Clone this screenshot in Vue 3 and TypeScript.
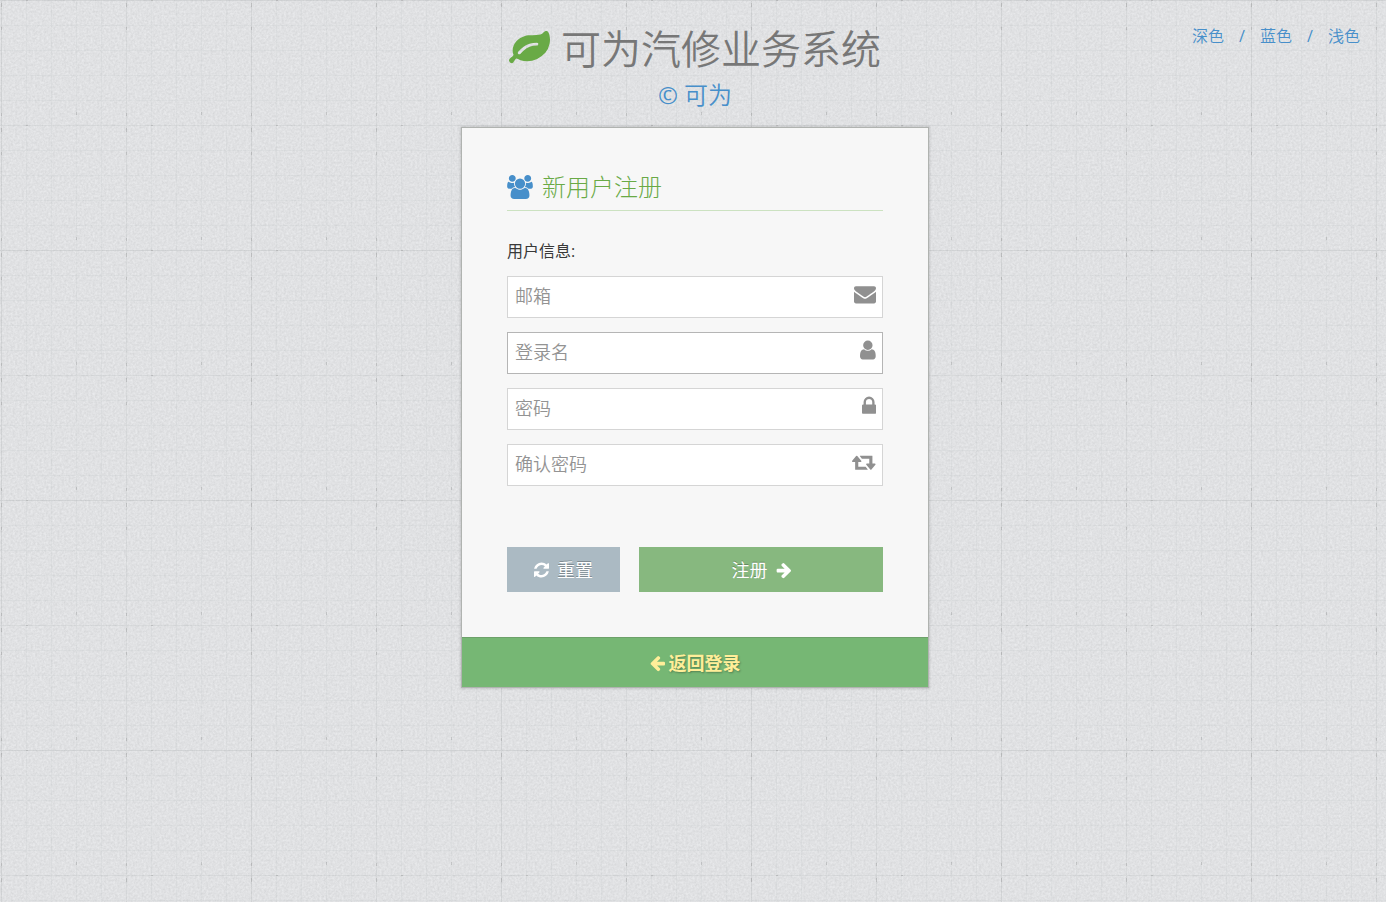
<script setup lang="ts">
import { reactive } from 'vue'

interface Field {
  key: 'email' | 'username' | 'password' | 'confirm'
  type: string
  label: string
  icon: string
  viewBox: string
  active?: boolean
}

const themes: string[] = ['深色', '蓝色', '浅色']

const form = reactive({ email: '', username: '', password: '', confirm: '' })

const fields: Field[] = [
  {
    key: 'email',
    type: 'email',
    label: '邮箱',
    viewBox: '0 0 1792 1792',
    icon: 'M1792 710v794q0 66-47 113t-113 47h-1472q-66 0-113-47t-47-113v-794q44 49 101 87 362 246 497 345 57 42 92.5 65.5t94.5 48 110 24.5h2q51 0 110-24.5t94.5-48 92.5-65.5q170-123 498-345 57-39 100-87zm0-294q0 79-49 151t-122 123q-376 261-468 325-10 7-42.5 31t-54 38.5-52 32.5-57.5 27-50 9h-2q-23 0-50-9t-57.5-27-52-32.5-54-38.5-42.5-31q-91-64-262-182.5t-205-142.5q-62-42-117-115.5t-55-136.5q0-78 41.5-130t118.5-52h1472q65 0 112.5 47t47.5 113z',
  },
  {
    key: 'username',
    type: 'text',
    label: '登录名',
    active: true,
    viewBox: '256 0 1280 1792',
    icon: 'M1536 1399q0 109-62.5 187t-150.5 78h-854q-88 0-150.5-78t-62.5-187q0-85 8.5-160.5t31.5-152 58.5-131 94-89 134.5-34.5q131 128 313 128t313-128q76 0 134.5 34.5t94 89 58.5 131 31.5 152 8.5 160.5zm-256-887q0 159-112.5 271.5t-271.5 112.5-271.5-112.5-112.5-271.5 112.5-271.5 271.5-112.5 271.5 112.5 112.5 271.5z',
  },
  {
    key: 'password',
    type: 'password',
    label: '密码',
    viewBox: '320 0 1152 1792',
    icon: 'M640 768h512v-192q0-106-75-181t-181-75-181 75-75 181v192zm832 96v576q0 40-28 68t-68 28h-960q-40 0-68-28t-28-68v-576q0-40 28-68t68-28h32v-192q0-184 132-316t316-132 316 132 132 316v192h32q40 0 68 28t28 68z',
  },
  {
    key: 'confirm',
    type: 'password',
    label: '确认密码',
    viewBox: '0 0 1920 1792',
    icon: 'M1280 1504q0 13-9.5 22.5t-22.5 9.5h-960q-8 0-13.5-2t-9-7-5.5-8-3-11.5-1-11.5v-600h-192q-26 0-45-19t-19-45q0-24 15-41l320-384q19-22 49-22t49 22l320 384q15 17 15 41 0 26-19 45t-45 19h-192v384h576q16 0 25 11l160 192q7 10 7 21zm640-416q0 24-15 41l-320 384q-20 23-49 23t-49-23l-320-384q-15-17-15-41 0-26 19-45t45-19h192v-384h-576q-16 0-25-12l-160-192q-7-9-7-20 0-13 9.5-22.5t22.5-9.5h960q8 0 13.5 2t9 7 5.5 8 3 11.5 1 11.5v600h192q26 0 45 19t19 45z',
  },
]
</script>

<template>
  <div class="page">
    <svg class="paper" aria-hidden="true">
      <defs>
        <filter id="grain" x="0" y="0" width="100%" height="100%" color-interpolation-filters="sRGB">
          <feTurbulence type="fractalNoise" baseFrequency="0.45" numOctaves="3" seed="4" stitchTiles="stitch" />
          <feColorMatrix values="0.1 0 0 0 0.829  0.1 0 0 0 0.833  0.1 0 0 0 0.841  0 0 0 0 1" />
        </filter>
        <pattern id="minor" x="1" width="25" height="25" patternUnits="userSpaceOnUse">
          <path d="M0 0h25v1H0zM0 1h1v24H0z" fill="#7a8088" fill-opacity=".06" />
        </pattern>
        <pattern id="major" x="1" width="125" height="125" patternUnits="userSpaceOnUse">
          <path d="M0 0h125v1H0zM0 1h1v124H0z" fill="#70767c" fill-opacity=".05" />
          <path d="M0 3h1v4H0zM0 27h1v3H0zM0 113h1v3H0zM75 112h1v3h-1zM25 0h2v1h-2z" fill="#555" fill-opacity=".2" />
        </pattern>
        <pattern id="sheet" x="1" width="250" height="250" patternUnits="userSpaceOnUse">
          <path d="M0 0h250v1H0zM0 1h1v249H0z" fill="#70767c" fill-opacity=".05" />
        </pattern>
      </defs>
      <rect width="100%" height="100%" filter="url(#grain)" />
      <rect width="100%" height="100%" fill="url(#minor)" />
      <rect width="100%" height="100%" fill="url(#major)" />
      <rect width="100%" height="100%" fill="url(#sheet)" />
    </svg>

    <nav class="themes" aria-label="主题">
      <template v-for="(theme, i) in themes" :key="theme">
        <span v-if="i > 0" class="slash">/</span>
        <a href="#">{{ theme }}</a>
      </template>
    </nav>

    <main class="column">
      <header class="brand">
        <h1>
          <svg class="leaf" viewBox="0 0 1792 1792" aria-hidden="true">
            <path d="M1280 704q0-26-19-45t-45-19q-172 0-318 49.5t-259.5 134-235.5 219.5q-19 21-19 45 0 26 19 45t45 19q24 0 45-19 27-24 74-71t67-66q137-124 268.5-176t313.5-52q26 0 45-19t19-45zm512-198q0 95-20 193-46 224-184.5 383t-357.5 268q-214 108-438 108-148 0-286-47-15-5-88-42t-96-37q-16 0-39.5 32t-45 70-52.5 70-60 32q-43 0-63.5-17.5t-45.5-59.5q-2-4-6-11t-5.5-10-3-9.5-1.5-13.5q0-35 31-73.5t68-65.5 68-56 31-48q0-4-14-38t-16-44q-9-51-9-104 0-115 43.5-220t119-184.5 170.5-139 204-95.5q55-18 145-25.5t179.5-9 178.5-6 163.5-24 113.5-56.5l29.5-29.5 29.5-28 27-20 36.5-16 43.5-4.5q39 0 70.5 46t47.5 112 24 124 8 96z" />
          </svg>
          <span>可为汽修业务系统</span>
        </h1>
        <p class="owner"><span class="mark">©</span> 可为</p>
      </header>

      <section class="card">
        <form class="body" @submit.prevent>
          <h2>
            <svg class="group" viewBox="0 0 1920 1792" aria-hidden="true">
              <path d="M593 896q-162 5-265 128h-134q-82 0-138-40.5t-56-118.5q0-353 124-353 6 0 43.5 21t97.5 42.5 119 21.5q67 0 133-23-5 37-5 66 0 139 81 256zm1071 637q0 120-73 189.5t-194 69.5h-874q-121 0-194-69.5t-73-189.5q0-53 3.5-103.5t14-109 26.5-108.5 43-97.5 62-81 85.5-53.5 111.5-20q10 0 43 21.5t73 48 107 48 135 21.5 135-21.5 107-48 73-48 43-21.5q61 0 111.5 20t85.5 53.5 62 81 43 97.5 26.5 108.5 14 109 3.5 103.5zm-1024-1277q0 106-75 181t-181 75-181-75-75-181 75-181 181-75 181 75 75 181zm704 384q0 159-112.5 271.5t-271.5 112.5-271.5-112.5-112.5-271.5 112.5-271.5 271.5-112.5 271.5 112.5 112.5 271.5zm576 225q0 78-56 118.5t-138 40.5h-134q-103-123-265-128 81-117 81-256 0-29-5-66 66 23 133 23 59 0 119-21.5t97.5-42.5 43.5-21q124 0 124 353zm-128-609q0 106-75 181t-181 75-181-75-75-181 75-181 181-75 181 75 75 181z" />
            </svg>
            <span>新用户注册</span>
          </h2>
          <p class="intro">用户信息:</p>

          <div class="fields">
            <label v-for="f in fields" :key="f.key" class="field" :class="{ active: f.active }">
              <input v-model="form[f.key]" :type="f.type" :placeholder="f.label" :aria-label="f.label" />
              <svg :viewBox="f.viewBox" aria-hidden="true"><path :d="f.icon" /></svg>
            </label>
          </div>

          <div class="actions">
            <button type="reset" class="reset">
              <svg viewBox="128 0 1536 1792" aria-hidden="true">
                <path d="M1639 1056q0 5-1 7-64 268-268 434.5t-478 166.5q-146 0-282.5-55t-243.5-157l-129 129q-19 19-45 19t-45-19-19-45v-448q0-26 19-45t45-19h448q26 0 45 19t19 45-19 45l-137 137q71 66 161 102t187 36q134 0 250-65t186-179q11-17 53-117 8-23 30-23h192q13 0 22.5 9.5t9.5 22.5zm25-800v448q0 26-19 45t-45 19h-448q-26 0-45-19t-19-45 19-45l138-138q-148-137-349-137-134 0-250 65t-186 179q-11 17-53 117-8 23-30 23h-199q-13 0-22.5-9.5t-9.5-22.5v-7q65-268 270-434.5t480-166.5q146 0 284 55.5t245 156.5l130-129q19-19 45-19t45 19 19 45z" />
              </svg>
              <span>重置</span>
            </button>
            <button type="submit" class="submit">
              <span>注册</span>
              <svg viewBox="64 0 1536 1792" aria-hidden="true">
                <path d="M1600 960q0 54-37 91l-651 651q-39 37-91 37-51 0-90-37l-75-75q-38-38-38-91t38-91l293-293h-704q-52 0-84.5-37.5t-32.5-90.5v-128q0-53 32.5-90.5t84.5-37.5h704l-293-294q-38-36-38-90t38-90l75-75q38-38 90-38 53 0 91 38l651 651q37 35 37 90z" />
              </svg>
            </button>
          </div>
        </form>

        <div class="toolbar">
          <a href="#">
            <svg viewBox="128 0 1536 1792" aria-hidden="true">
              <path d="M1664 896v128q0 53-32.5 90.5t-84.5 37.5h-704l293 294q38 36 38 90t-38 90l-75 76q-37 37-90 37-52 0-91-37l-651-652q-37-37-37-90 0-52 37-91l651-650q38-38 91-38 52 0 90 38l75 74q38 38 38 91t-38 91l-293 293h704q52 0 84.5 37.5t32.5 90.5z" />
            </svg>
            <span>返回登录</span>
          </a>
        </div>
      </section>
    </main>
  </div>
</template>

<style>
body {
  margin: 0;
  background: #dfe0e2;
}
</style>

<style scoped>
.page {
  position: relative;
  box-sizing: border-box;
  min-height: 100vh;
  padding: 20px 0 20px 4px;
  overflow: hidden;
  font-family: "Open Sans", "Noto Sans CJK SC", sans-serif;
  font-size: 16px;
  line-height: 24px;
  color: #393939;
}

.paper {
  position: absolute;
  inset: 0;
  width: 100%;
  height: 100%;
}

svg {
  flex: none;
  fill: currentColor;
}

a {
  color: #478fca;
  text-decoration: none;
}

.themes {
  position: absolute;
  top: 24px;
  right: 26px;
  z-index: 1;
  display: flex;
  font-weight: 350;
  color: #478fca;
}

.slash {
  width: 36px;
  text-align: center;
  font-weight: 400;
}

.column {
  position: relative;
  max-width: 468px;
  margin: 0 auto;
}

.brand {
  display: flex;
  flex-direction: column;
  align-items: center;
}

h1 {
  display: flex;
  align-items: center;
  gap: 11px;
  margin: 0;
  font-size: 40px;
  font-weight: 350;
  line-height: 58px;
  color: #777;
  white-space: nowrap;
}

.leaf {
  width: 41px;
  height: 41px;
  margin-bottom: 2px;
  color: #69aa46;
}

.owner {
  margin: 0 0 15px;
  font-size: 24px;
  font-weight: 350;
  line-height: 34px;
  color: #478fca;
}

.mark {
  font-weight: 400;
}

.card {
  box-sizing: border-box;
  border: 1px solid #b0b3b0;
  background: #f7f7f7;
  box-shadow: 0 0 2px 1px rgba(0, 0, 0, 0.12);
}

.body {
  padding: 41px 45px 45px;
}

h2 {
  display: flex;
  align-items: center;
  gap: 9px;
  margin: 0;
  padding-bottom: 5px;
  border-bottom: 1px solid #cce2c1;
  font-size: 24px;
  font-weight: 300;
  line-height: 36px;
  color: #69aa46;
}

.group {
  width: 26px;
  height: 24px;
  color: #478fca;
}

.intro {
  margin: 28px 0 13px;
}

.fields {
  display: grid;
  gap: 14px;
}

.field {
  display: flex;
  align-items: center;
  box-sizing: border-box;
  height: 42px;
  padding: 0 6px 2px 7px;
  border: 1px solid #d5d5d5;
  background: #fff;
  color: #909090;
}

.field.active {
  border-color: #b5b5b5;
}

.field input {
  flex: 1;
  min-width: 0;
  padding: 0;
  border: 0;
  outline: 0;
  background: none;
  font: inherit;
  font-size: 18px;
  font-weight: 350;
  color: #858585;
}

.field input::placeholder {
  color: #939393;
  opacity: 1;
}

.field svg {
  height: 22px;
  margin-bottom: 4px;
}

.actions {
  display: grid;
  grid-template-columns: 3fr 244px;
  gap: 19px;
  margin-top: 61px;
}

button {
  display: flex;
  align-items: center;
  justify-content: center;
  gap: 8px;
  height: 45px;
  padding: 0;
  border: 0;
  font: inherit;
  font-size: 18px;
  color: #fff;
  text-shadow: 0 -1px 0 rgba(0, 0, 0, 0.25);
}

.reset {
  background: #abbac3;
}

.submit {
  background: #87b87f;
}

button svg,
.toolbar svg {
  width: 15px;
  height: 18px;
}

.toolbar {
  display: flex;
  align-items: center;
  justify-content: center;
  height: 49px;
  border-top: 1px solid #6da16a;
  background: #76b774;
}

.toolbar a {
  display: flex;
  align-items: center;
  gap: 4px;
  font-size: 18px;
  font-weight: 700;
  color: #fe9;
  text-shadow: 1px 1px 2px rgba(0, 0, 0, 0.3);
}
</style>
